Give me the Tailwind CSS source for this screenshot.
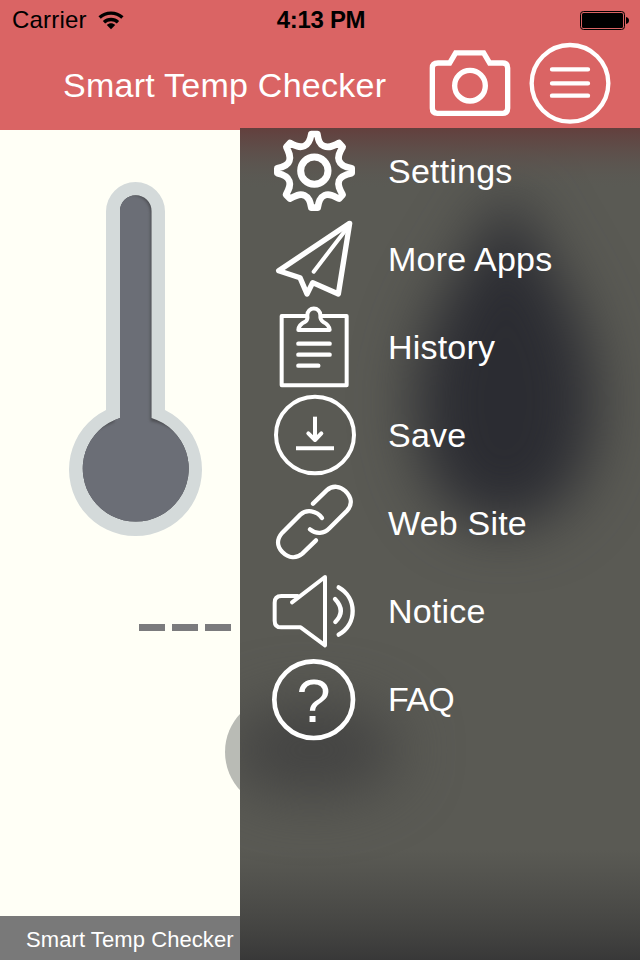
<!DOCTYPE html>
<html lang="en">

<head>
  <meta charset="UTF-8" />
  <meta name="viewport" content="width=device-width, initial-scale=1" />
  <title>Smart Temp Checker</title>

  <!-- Tailwind CDN -->
  <script src="https://cdn.jsdelivr.net/npm/@tailwindcss/browser@4"></script>
</head>

<body class="relative flex h-[960px] w-[640px] flex-col overflow-hidden bg-[#fffff6] font-['Liberation_Sans',Arial,sans-serif]">

  <!-- HEADER -->
  <header class="h-[130px] shrink-0 bg-[#da6464]">
    <!-- Status bar -->
    <div class="grid h-10 grid-cols-3 items-center pr-[10px] pl-3 text-[24px] leading-10 text-black">
      <div class="flex items-center gap-[11px]">
        <span class="tracking-[0.2px]">Carrier</span>
        <svg class="h-[19px] w-[26px]" viewBox="0 0 26 19" fill="none" stroke="#000" stroke-width="3.4">
          <path d="M1.6 6.6C8 .6 18 .6 24.4 6.6" />
          <path d="M6 11.3C10 7.6 16 7.6 20 11.3" />
          <path d="M13 18.2L8.8 14C11.2 11.8 14.8 11.8 17.2 14Z" fill="#000" stroke="none" />
        </svg>
      </div>
      <div class="text-center font-bold tracking-[-0.3px]">4:13 PM</div>
      <div class="flex justify-end">
        <svg class="h-5 w-[50px]" viewBox="0 0 50 20">
          <rect x=".5" y="1.5" width="44" height="18" rx="3" fill="none" stroke="#000" />
          <rect x="2" y="3" width="41" height="15" rx="1.5" />
          <path d="M46 7c4 .5 4 6.500 0 7z" />
        </svg>
      </div>
    </div>

    <!-- Title bar -->
    <div class="flex h-[90px] items-start pl-[63px] text-white">
      <h1 class="w-[366px] pt-[25px] text-[34px] leading-10 tracking-[0.25px] whitespace-nowrap">Smart Temp Checker</h1>
      <svg class="mt-[9px] h-[68px] w-[83px]" viewBox="0 0 249 204" fill="none" stroke="#fff" stroke-width="16">
        <path d="M27 42H62L80 11.500H164L182 42H221Q236 42 236 57V178Q236 193 221 193H25Q10 193 10 178V57Q10 42 27 42Z" stroke-linejoin="miter" />
        <circle cx="123" cy="110" r="46" />
      </svg>
      <svg class="mt-[2px] ml-[17px] h-[82px] w-[82px]" viewBox="0 0 246 246" fill="none" stroke="#fff" stroke-width="13" stroke-linecap="round">
        <circle cx="123" cy="124" r="115" />
        <path d="M69 82H177M69 124H177M69 161H177" />
      </svg>
    </div>
  </header>

  <!-- THERMOMETER -->
  <main class="flex flex-1 flex-col items-start">
    <svg class="mt-[50px] ml-[66px] h-[358px] w-[140px]" viewBox="66 180 140 358">
      <defs>
        <clipPath id="tube">
          <path d="M120 418V211A15.750 15.750 0 0 1 151.500 211V418A53 53 0 1 1 120 418Z" />
        </clipPath>
        <filter id="soft" x="-20%" y="-20%" width="140%" height="140%" color-interpolation-filters="sRGB">
          <feGaussianBlur stdDeviation="1.6" />
        </filter>
      </defs>
      <path d="M106 410V211.500A29.500 29.500 0 0 1 165 211.500V410A66.500 66.500 0 1 1 106 410Z" fill="#d4dada" />
      <g clip-path="url(#tube)">
        <rect x="66" y="180" width="140" height="358" fill="#4c4d51" />
        <path d="M114 422V213A18.250 18.250 0 0 1 150.500 213V421A53 53 0 0 1 135 530H72V440Z" fill="#6b6e76" filter="url(#soft)" />
      </g>
    </svg>

    <!-- Empty reading -->
    <div class="mt-[86px] ml-[139px] flex gap-[7px]">
      <span class="h-[7px] w-[26px] bg-[#7b7b7d]"></span>
      <span class="h-[7px] w-[26px] bg-[#7b7b7d]"></span>
      <span class="h-[7px] w-[26px] bg-[#7b7b7d]"></span>
    </div>
    <div class="mt-[65px] ml-[225px] h-[112px] w-[112px] rounded-full bg-[#b9bbb5]"></div>
  </main>

  <!-- FOOTER -->
  <footer class="h-11 shrink-0 bg-[#797979] pt-[2px] pl-[26px] text-[22px] leading-11 tracking-[0.08px] text-white">Smart Temp Checker</footer>

  <!-- MENU -->
  <nav class="absolute top-[128px] left-[240px] h-[832px] w-[400px] overflow-hidden bg-[#5a5a54]">
    <svg class="absolute inset-0 h-full w-full" viewBox="240 128 400 832">
      <defs>
        <filter id="blur" x="-80%" y="-80%" width="260%" height="260%" color-interpolation-filters="sRGB">
          <feGaussianBlur stdDeviation="30" />
        </filter>
        <linearGradient id="top" x1="0" y1="0" x2="0" y2="1">
          <stop offset="0" stop-color="#633f3d" />
          <stop offset=".35" stop-color="#5f4b47" stop-opacity=".8" />
          <stop offset="1" stop-color="#5a5a54" stop-opacity="0" />
        </linearGradient>
        <linearGradient id="bottom" x1="0" y1="0" x2="0" y2="1">
          <stop offset="0" stop-color="#464644" stop-opacity="0" />
          <stop offset=".55" stop-color="#434341" stop-opacity=".7" />
          <stop offset="1" stop-color="#383838" />
        </linearGradient>
      </defs>
      <path d="M508 185C535 255 595 310 595 400C595 475 560 525 505 525C445 525 416 475 416 400C416 310 480 255 508 185Z" fill="#2b2c32" filter="url(#blur)" />
      <ellipse cx="312" cy="750" rx="88" ry="46" fill="#434342" filter="url(#blur)" />
      <rect x="240" y="128" width="400" height="62" fill="url(#top)" />
      <rect x="240" y="850" width="400" height="110" fill="url(#bottom)" />
    </svg>

    <ul class="relative text-[34px] leading-[86px] tracking-[0.2px] text-white">
      <li class="flex h-[88px] gap-[18px] pl-5">
        <svg class="h-[88px] w-[110px]" viewBox="0 9 330 264" fill="none" stroke="#fff" stroke-width="20" stroke-linejoin="round">
          <path d="M154 27H172C175 46 178 57 191 63C207 70 221 63 237 54L248 66C239 82 232 93 237 107C242 122 257 127 275 130V145C256 149 242 154 237 167C232 181 239 194 248 209L237 221C220 212 207 205 194 211C179 218 176 231 173 248H154C151 231 148 218 133 211C119 205 106 212 90 221L78 209C87 193 93 182 88 168C83 154 70 149 52 145V130C70 126 84 121 88 108C93 94 87 82 79 66L90 54C106 63 119 69 133 63C147 57 151 45 154 27Z" />
          <circle cx="163" cy="137" r="41" stroke-width="21" />
        </svg>
        <span>Settings</span>
      </li>
      <li class="flex h-[88px] gap-[18px] pl-5">
        <svg class="h-[88px] w-[110px]" viewBox="0 3 330 264" fill="none" stroke="#fff" stroke-width="16" stroke-linecap="round" stroke-linejoin="round">
          <path d="M269 25L56 167L120 188L141 237L158 203L235 237Z" />
          <path d="M264 36L161 170" stroke-width="12" />
        </svg>
        <span>More Apps</span>
      </li>
      <li class="flex h-[88px] gap-[18px] pl-5">
        <svg class="h-[88px] w-[110px]" viewBox="0 3 330 264" fill="none" stroke="#fff" stroke-width="12" stroke-linejoin="round">
          <path d="M140 39H65V247H260V39H183" />
          <path d="M115 81Q116 65 136 56Q144 51 142 36A19 19 0 0 1 181 36Q180 51 190 57Q208 66 209 81Z" />
          <path d="M115 122H209M115 155H209M115 188H175" stroke-width="13" stroke-linecap="round" />
        </svg>
        <span>History</span>
      </li>
      <li class="flex h-[88px] gap-[18px] pl-5">
        <svg class="h-[88px] w-[110px]" viewBox="0 6 330 264" fill="none" stroke="#fff" stroke-width="12">
          <ellipse cx="165" cy="135" rx="117" ry="115" />
          <path d="M165 80V148" />
          <path d="M145 130L165 150L184 130" stroke-linecap="round" stroke-linejoin="round" />
          <path d="M108 175H222" />
        </svg>
        <span>Save</span>
      </li>
      <li class="flex h-[88px] gap-[18px] pl-5">
        <svg class="h-[88px] w-[110px]" viewBox="0 6 330 264" fill="none" stroke="#fff" stroke-width="13" stroke-linecap="round">
          <path d="M159 77L200 37C219 20 241 25 256 39C274 57 279 79 261 98L209 150C192 168 168 169 150 154" />
          <path d="M186 120C170 97 139 93 121 110L67 164C50 183 50 205 67 222C86 241 109 242 127 227L168 187" />
        </svg>
        <span>Web Site</span>
      </li>
      <li class="flex h-[88px] gap-[18px] pl-5">
        <svg class="h-[88px] w-[110px]" viewBox="0 3 330 264" fill="none" stroke="#fff" stroke-width="12" stroke-linecap="round" stroke-linejoin="round">
          <path d="M113 87H64Q44 87 44 107V161Q44 181 64 181H122L195 235V30L96 106" />
          <path d="M225 96Q259 132 226 165M236 61C291 92 293 170 236 203" stroke-width="13" />
        </svg>
        <span>Notice</span>
      </li>
      <li class="flex h-[88px] gap-[18px] pl-5">
        <svg class="h-[88px] w-[110px]" viewBox="0 3 330 264">
          <ellipse cx="161" cy="134" rx="118" ry="115" fill="none" stroke="#fff" stroke-width="14" />
          <text x="161" y="201" text-anchor="middle" font-size="184" fill="#fff">?</text>
        </svg>
        <span class="tracking-[-0.6px]">FAQ</span>
      </li>
    </ul>
  </nav>

</body>

</html>
